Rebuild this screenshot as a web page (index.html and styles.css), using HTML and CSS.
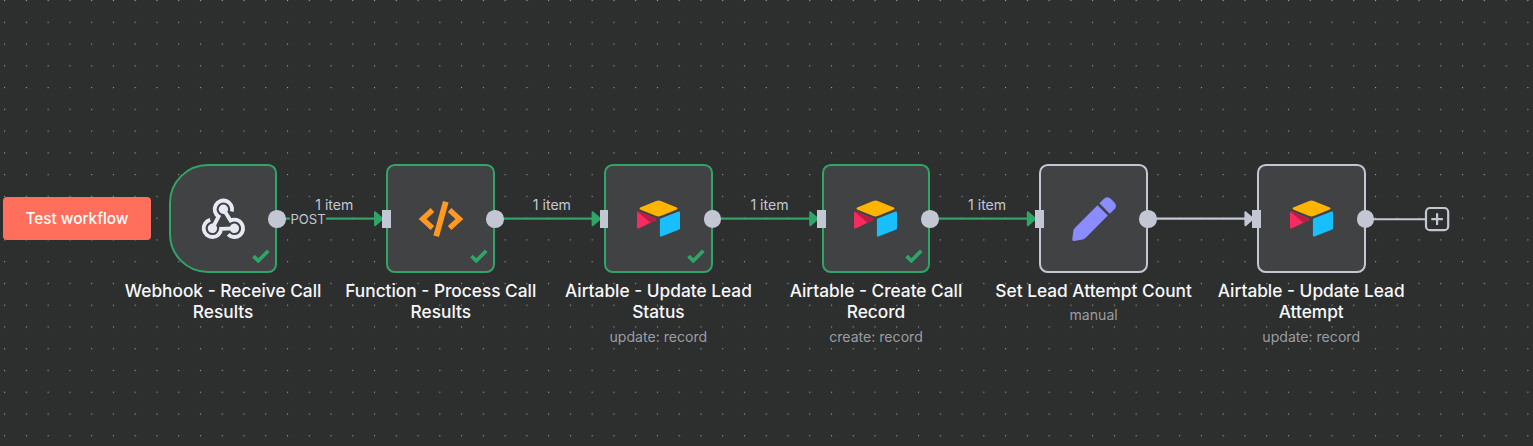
FILE: index.html
```html
<!DOCTYPE html>
<html lang="en">
<head>
<meta charset="utf-8">
<title>Workflow canvas</title>
<link rel="stylesheet" href="styles.css">
</head>
<body>
<svg class="defs" aria-hidden="true">
  <symbol id="airtable" viewBox="11 10.5 177 148">
    <path fill="#ffb400" d="M90.039 12.368 24.079 39.66c-3.667 1.519-3.63 6.729.062 8.192l66.235 26.266a24.58 24.58 0 0 0 18.12 0l66.236-26.266c3.69-1.463 3.729-6.673.062-8.192l-65.96-27.293a24.58 24.58 0 0 0-18.795 0"/>
    <path fill="#18bfff" d="M105.312 88.46v65.617c0 3.12 3.147 5.258 6.048 4.108l73.806-28.648a4.42 4.42 0 0 0 2.79-4.108V59.813c0-3.121-3.147-5.258-6.048-4.108l-73.806 28.648a4.42 4.42 0 0 0-2.79 4.108"/>
    <path fill="#f82b60" d="m88.078 91.846-21.904 10.576-2.224 1.075-46.238 22.155c-2.93 1.414-6.672-.722-6.672-3.978V60.088c0-1.178.604-2.195 1.414-2.96a5 5 0 0 1 1.12-.84c1.104-.663 2.68-.84 4.02-.31L87.71 83.76c3.564 1.414 3.844 6.408.368 8.087"/>
    <path fill="#ba1e45" d="m88.078 91.846-21.904 10.576-53.72-45.295a5 5 0 0 1 1.12-.84c1.104-.663 2.68-.84 4.02-.31L87.71 83.76c3.564 1.414 3.844 6.408.368 8.087"/>
  </symbol>
  <symbol id="check" viewBox="0 0 18 14">
    <path d="M1.5 7.2 6.3 11.8 16.3 1.8" fill="none" stroke="#2fa567" stroke-width="3.7"/>
  </symbol>
</svg>

<main class="canvas">
  <svg class="layer" width="1533" height="446">
    <defs>
      <pattern id="dots" x="4.1" y="0" width="21.76" height="21.76" patternUnits="userSpaceOnUse">
        <circle cx="0.6" cy="0.6" r="0.6" fill="#b4b5b7"/>
      </pattern>
    </defs>
    <rect width="1533" height="446" fill="url(#dots)"/>
    <g class="edge done">
      <path class="line" d="M277.6 218.6H376"/><path class="head" d="M375 212.2 382.5 218.7 375 225.2Z"/>
      <path class="line" d="M495.2 218.6H594"/><path class="head" d="M592.6 212.2 600.1 218.7 592.6 225.2Z"/>
      <path class="line" d="M712.8 218.6H812"/><path class="head" d="M810.2 212.2 817.7 218.7 810.2 225.2Z"/>
      <path class="line" d="M930.4 218.6H1029"/><path class="head" d="M1027.8 212.2 1035.3 218.7 1027.8 225.2Z"/>
    </g>
    <g class="edge idle">
      <path class="line" d="M1148 218.6H1247"/><path class="head" d="M1245.4 212.2 1252.9 218.7 1245.4 225.2Z"/>
      <path class="line" d="M1365.6 219.2H1426"/>
    </g>
  </svg>

  <button class="test">Test workflow</button>

  <span class="count c1">1 item</span>
  <span class="count c2">1 item</span>
  <span class="count c3">1 item</span>
  <span class="count c4">1 item</span>
  <span class="method">POST</span>

  <article class="node n1 done trigger">
    <div class="box">
      <svg class="icon" width="43.5" height="43.5" viewBox="-.7 0 43.5 43.5">
        <defs>
          <g id="hook">
            <path d="M30.1 14.6A8.7 8.7 0 1 0 16.9 19.5L10.7 31.3" fill="none" stroke="#e8eaf3" stroke-width="3.9"/>
            <circle cx="21.7" cy="12.3" r="4.7" fill="#e8eaf3"/>
          </g>
        </defs>
        <use href="#hook"/>
        <use href="#hook" transform="rotate(120 21.7 24.97)"/>
        <use href="#hook" transform="rotate(240 21.7 24.97)"/>
      </svg>
      <svg class="check" width="18" height="14"><use href="#check"/></svg>
      <i class="out"></i>
    </div>
    <h2>Webhook - Receive Call Results</h2>
  </article>

  <article class="node n2 done">
    <div class="box">
      <svg class="icon" width="44" height="36" viewBox="0 0 44 36" fill="none" stroke="#ff9922">
        <path d="M13.4 9 3.6 18l9.8 9M30.6 9l9.8 9-9.8 9" stroke-width="5.3"/>
        <path d="M26.8 .8 17.2 35.2" stroke-width="5.8"/>
      </svg>
      <svg class="check" width="18" height="14"><use href="#check"/></svg>
      <i class="in"></i><i class="out"></i>
    </div>
    <h2>Function - Process Call Results</h2>
  </article>

  <article class="node n3 done">
    <div class="box">
      <svg class="icon" width="43" height="37"><use href="#airtable"/></svg>
      <svg class="check" width="18" height="14"><use href="#check"/></svg>
      <i class="in"></i><i class="out"></i>
    </div>
    <h2>Airtable - Update Lead Status</h2>
    <p>update: record</p>
  </article>

  <article class="node n4 done">
    <div class="box">
      <svg class="icon" width="43" height="37"><use href="#airtable"/></svg>
      <svg class="check" width="18" height="14"><use href="#check"/></svg>
      <i class="in"></i><i class="out"></i>
    </div>
    <h2>Airtable - Create Call Record</h2>
    <p>create: record</p>
  </article>

  <article class="node n5">
    <div class="box">
      <svg class="icon" width="44" height="44" viewBox="0 0 44 44" fill="#8b8cff">
        <path d="M25.5 8.3 35.8 18.6 14 40.6Q12.6 42 10.6 42.5L2 43.9Q.2 44.1.3 42.3L1.4 33.6Q1.6 32 2.8 30.9Z"/>
        <path d="M27.4 6.3 31.6 2Q35.4-1.4 39 2L42.4 5.5Q45.6 9.2 42.2 12.6L37.8 16.7Z"/>
      </svg>
      <i class="in"></i><i class="out"></i>
    </div>
    <h2>Set Lead Attempt Count</h2>
    <p>manual</p>
  </article>

  <article class="node n6">
    <div class="box">
      <svg class="icon" width="43" height="37"><use href="#airtable"/></svg>
      <i class="in"></i><i class="out"></i>
    </div>
    <h2>Airtable - Update Lead Attempt</h2>
    <p>update: record</p>
  </article>

  <svg class="plus" width="26" height="26" viewBox="0 0 26 26" fill="none" stroke="#c3c7d4">
    <rect x="2" y="2" width="22.2" height="22.2" rx="4" stroke-width="2.2" fill="#2d2e2e"/>
    <path d="M13.1 7.3v11.6M7.3 13.1h11.6" stroke-width="2.2"/>
  </svg>
</main>
</body>
</html>
```
FILE: styles.css
```css
body {
  margin: 0;
  background: #2d2e2e;
  font-family: Inter, "Liberation Sans", sans-serif;
}
.defs { position: absolute; width: 0; height: 0; }
.canvas {
  position: relative;
  width: 1533px;
  height: 446px;
  overflow: hidden;
}
.layer { position: absolute; left: 0; top: 0; }
.line { fill: none; stroke-width: 2.1; }
.head { stroke-width: 2; stroke-linejoin: round; }
.edge.done { stroke: #2fa567; }
.edge.done .head { fill: #2fa567; }
.edge.idle { stroke: #c3c7d4; }
.edge.idle .head { fill: #c3c7d4; }

.test {
  position: absolute;
  left: 3px;
  top: 197.4px;
  width: 148px;
  height: 42.6px;
  padding: 0;
  border: 0;
  border-radius: 4px;
  background: #ff6f5c;
  color: #fff;
  font: 550 15.3px/43px Inter, sans-serif;
}

.count, .method {
  position: absolute;
  color: #c3c7d4;
  font-size: 14.1px;
  line-height: 18px;
  white-space: nowrap;
}
.count { top: 196px; width: 80px; text-align: center; }
.c1 { left: 294.3px; }
.c2 { left: 511.9px; }
.c3 { left: 729.5px; }
.c4 { left: 947.1px; }
.method {
  left: 290.4px;
  top: 212px;
  line-height: 15px;
  font-size: 13.1px;
  background: #2d2e2e;
}

.node {
  position: absolute;
  top: 164.3px;
  width: 216px;
  display: flex;
  flex-direction: column;
  align-items: center;
  text-align: center;
}
.n1 { left: 115.1px; }
.n2 { left: 332.8px; }
.n3 { left: 550.4px; }
.n4 { left: 768px; }
.n5 { left: 985.6px; }
.n6 { left: 1203.2px; }

.box {
  position: relative;
  box-sizing: border-box;
  width: 108.8px;
  height: 108.8px;
  display: flex;
  align-items: center;
  justify-content: center;
  border: 2px solid #c3c7d4;
  border-radius: 8.7px;
  background: #414244;
}
.done .box { border-color: #2fa567; }
.trigger .box { border-radius: 39px 8.7px 8.7px 39px; }
.icon { display: block; overflow: visible; }
.check { position: absolute; right: 5.6px; bottom: 8px; }
.in, .out { position: absolute; background: #c3c7d4; }
.in { left: -6.3px; top: 44px; width: 8.7px; height: 18px; }
.out {
  right: -10.6px;
  top: 43.9px;
  width: 17.6px;
  height: 17.6px;
  border-radius: 50%;
}
h2 {
  width: 206px;
  margin: 6.5px 0 0;
  color: #f7f8fa;
  font-size: 17.3px;
  font-weight: 550;
  line-height: 21.2px;
}
p {
  margin: 5.6px 0 0;
  color: #9b9da4;
  font-size: 14.1px;
  line-height: 18px;
}
.plus { position: absolute; left: 1424px; top: 206px; }
```
